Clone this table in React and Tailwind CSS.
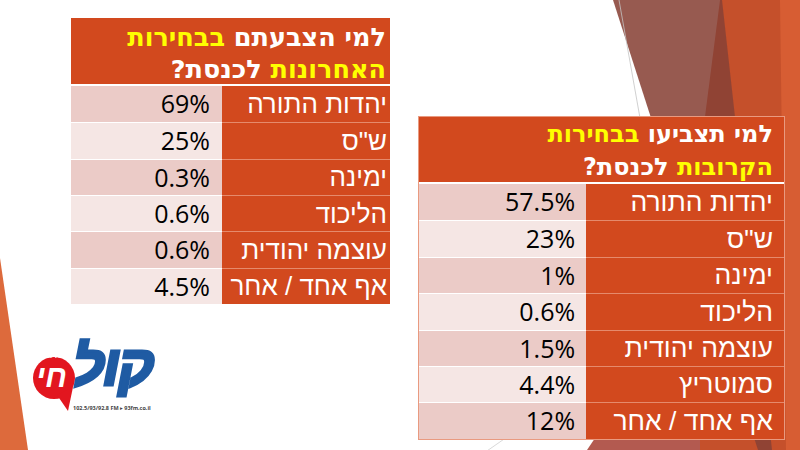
import React from "react";

const lastVote = [
  ["יהדות התורה", "69%"],
  ['ש"ס', "25%"],
  ["ימינה", "0.3%"],
  ["הליכוד", "0.6%"],
  ["עוצמה יהודית", "0.6%"],
  ["אף אחד / אחר", "4.5%"],
];

const nextVote = [
  ["יהדות התורה", "57.5%"],
  ['ש"ס', "23%"],
  ["ימינה", "1%"],
  ["הליכוד", "0.6%"],
  ["עוצמה יהודית", "1.5%"],
  ["סמוטריץ", "4.4%"],
  ["אף אחד / אחר", "12%"],
];

function Backdrop() {
  return (
    <svg className="absolute inset-0" width="800" height="450" viewBox="0 0 800 450">
      <polygon points="0,258 28,450 0,450" fill="#dd6a3c" />
      <polygon points="720,0 800,0 800,450 662,450" fill="#c5502b" />
      <polygon points="587,450 700,282 700,450" fill="#b35a50" />
      <polygon points="613,0 722,0 772,450 758,450" fill="#874236" fillOpacity="0.87" />
      <polygon points="780,0 800,0 800,450 786,450" fill="#d75d33" />
      <line x1="619" y1="0" x2="640" y2="118" stroke="#c4c4c4" strokeWidth="0.8" />
      <line x1="484" y1="453" x2="520" y2="428" stroke="#cfcfcf" strokeWidth="0.8" />
    </svg>
  );
}

function PollTable({ lines, rows, className, headerClass, rowClass, partyClass, valueClass }) {
  return (
    <div dir="rtl" className={className}>
      <div className={"bg-[#d2491e] font-['DejaVu_Sans'] font-bold text-white border-b-2 border-white " + headerClass}>
        <div>
          <span>{lines[0][0]} </span>
          <span className="text-[#ffff00]">{lines[0][1]}</span>
        </div>
        <div>
          <span className="text-[#ffff00]">{lines[1][0]}</span>
          <span> {lines[1][1]}</span>
        </div>
      </div>
      {rows.map(([party, value], i) => (
        <div key={party} className={"flex " + rowClass}>
          <div
            className={
              "flex items-center bg-[#d2491e] text-white leading-none whitespace-nowrap font-['Liberation_Sans'] border-t border-[#e58a6c] " +
              partyClass +
              (i === 0 ? " border-t-0" : "")
            }
          >
            {party}
          </div>
          <div
            className={
              "flex items-center text-black font-['Open_Sans'] text-[25px] border-t border-white " +
              (i % 2 === 0 ? "bg-[#ebcbc7] " : "bg-[#f5e6e4] ") +
              valueClass +
              (i === 0 ? " border-t-0" : "")
            }
          >
            {value}
          </div>
        </div>
      ))}
    </div>
  );
}

function Logo({ className }) {
  return (
    <div className={"relative w-[125px] h-[75px] " + className}>
      <svg className="absolute inset-0" width="125" height="75" viewBox="0 0 125 75">
        <circle cx="21" cy="38" r="21" fill="#e2161f" />
        <polygon points="24,55 40,47 35,71" fill="#e2161f" />
      </svg>
      <div dir="rtl" className="absolute left-[8px] top-[13px] w-[26px] text-[6px] leading-none font-bold italic text-white text-center whitespace-nowrap">
        תמיד אתי!
      </div>
      <div dir="rtl" className="absolute left-[3px] top-[21px] text-[31px] leading-none font-bold italic text-white font-['Liberation_Sans']">
        חי
      </div>
      <div
        dir="rtl"
        className="absolute left-[40px] top-[-2px] text-[56px] leading-none font-bold italic text-[#1f5ba3] tracking-[-2px] font-['Liberation_Sans'] [-webkit-text-stroke:3px_#1f5ba3]"
      >
        קול
      </div>
      <div className="absolute left-[40px] top-[66px] text-[5.5px] leading-none font-bold text-[#444] whitespace-nowrap">
        102.5/93/92.8 FM ▸ 93fm.co.il
      </div>
    </div>
  );
}

export default function App() {
  return (
    <div
      className="relative w-[800px] h-[450px] overflow-hidden bg-white"
      style={{ fontFamily: '"Open Sans", "Liberation Sans", "DejaVu Sans", sans-serif' }}
    >
      <Backdrop />
      <div className="relative flex pl-[33px] pt-[18px]">
        <div className="flex flex-col">
          <PollTable
            className="ml-[38px] w-[319px]"
            lines={[
              ["למי הצבעתם", "בבחירות"],
              ["האחרונות", "לכנסת?"],
            ]}
            rows={lastVote}
            headerClass="h-[68px] pt-[3px] pr-[4px] text-[25.5px] leading-[32px]"
            rowClass="h-[36.33px]"
            partyClass="w-[168px] pr-[3px] text-[26px]"
            valueClass="w-[151px] pr-[12px]"
          />
          <Logo className="mt-[36px]" />
        </div>
        <PollTable
          className="ml-[28px] mt-[98px] w-[367px] border border-[#e99a80]"
          lines={[
            ["למי תצביעו", "בבחירות"],
            ["הקרובות", "לכנסת?"],
          ]}
          rows={nextVote}
          headerClass="h-[67px] pt-[1px] pr-[11px] text-[24px] leading-[33px]"
          rowClass="h-[36.4px]"
          partyClass="w-[199px] pr-[11px] text-[26.5px]"
          valueClass="w-[168px] pr-[11px]"
        />
      </div>
    </div>
  );
}
